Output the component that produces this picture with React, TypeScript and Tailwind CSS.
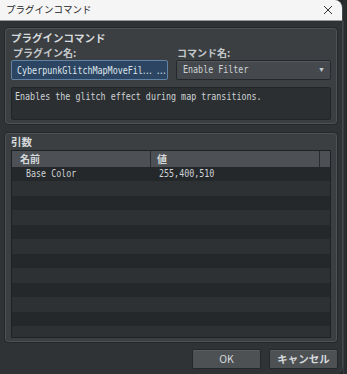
import React from "react";

const jp = { fontFamily: '"Noto Sans CJK JP", "Noto Sans", sans-serif' };
const mono = { fontFamily: '"DejaVu Sans Mono", "Liberation Mono", monospace' };

function Mono({ children, className = "" }: { children: React.ReactNode; className?: string }) {
  return (
    <span className={"inline-block origin-left scale-x-[0.76] whitespace-pre " + className} style={mono}>
      {children}
    </span>
  );
}

export default function App() {
  const rows = Array.from({ length: 12 });
  return (
    <div className="w-[347px] h-[374px] bg-[#25282a] flex overflow-hidden">
      <div className="w-[343px] h-full shrink-0 rounded-r-[8px] overflow-hidden flex flex-col bg-[#2f3336] border-r border-[#45494c]">
        <div className="h-[21px] shrink-0 bg-[#f5f5f5] flex items-center justify-between pl-[6px] pr-[8px] border-b border-[#9a9a9a]">
          <span className="text-[9.5px] text-[#222] leading-none" style={jp}>プラグインコマンド</span>
          <svg width="10" height="10" viewBox="0 0 10 10" className="mr-[1px]">
            <path d="M1 1 L9 9 M9 1 L1 9" stroke="#333" strokeWidth="1" />
          </svg>
        </div>
        <div className="flex-1 min-h-0 flex flex-col px-[4px] pt-[6px] pb-[5px]">
          <div className="h-[98px] shrink-0 rounded-[4px] border border-[#25282b] bg-[#3b3f42] shadow-[inset_0_0_0_1px_#4d5255] px-[6px] pt-[3px] flex flex-col">
            <div className="text-[10.5px] font-bold text-[#d8dbdd] leading-[14px]" style={jp}>プラグインコマンド</div>
            <div className="flex gap-[8px] mt-[1px]">
              <div className="w-[157px] flex flex-col">
                <div className="text-[10px] font-bold text-[#c4c8cb] leading-[13px] pl-[2px]" style={jp}>プラグイン名:</div>
                <div className="mt-[1px] h-[20px] bg-[#2c4563] border border-[#6183a6] rounded-[2px] flex items-center pl-[5px] overflow-hidden">
                  <Mono className="text-[11px] leading-[14px] text-[#dfe5ea]">
                    CyberpunkGlitchMapMoveFil<span style={jp}>…</span> <span style={jp}>…</span>
                  </Mono>
                </div>
              </div>
              <div className="flex-1 flex flex-col">
                <div className="text-[10px] font-bold text-[#c4c8cb] leading-[13px] pl-[1px]" style={jp}>コマンド名:</div>
                <div className="relative mt-[1px] h-[20px] bg-[#45494d] border border-[#26292c] rounded-[2px] flex items-center pl-[6px] overflow-hidden shadow-[inset_0_1px_0_#53575b]">
                  <Mono className="text-[11px] leading-[14px] text-[#cfd3d6]">Enable Filter</Mono>
                  <span className="absolute right-[5px] top-[4px] text-[7px] text-[#c8cbce]">▼</span>
                </div>
              </div>
            </div>
            <div className="mt-[7px] h-[33px] bg-[#2b2f32] border border-[#222528] rounded-[2px] px-[3px] pt-[2px] overflow-hidden flex items-start">
              <Mono className="text-[11px] text-[#cfd3d6] leading-[14px]">Enables the glitch effect during map transitions.</Mono>
            </div>
          </div>
          <div className="mt-[7px] flex-1 min-h-0 rounded-[4px] border border-[#25282b] bg-[#3b3f42] shadow-[inset_0_0_0_1px_#4d5255] px-[6px] pt-[2px] pb-[4px] flex flex-col">
            <div className="text-[10.5px] font-bold text-[#d8dbdd] leading-[14px] shrink-0" style={jp}>引数</div>
            <div className="mt-[1px] flex-1 min-h-0 border border-[#1f2224] bg-[#2d3134] flex flex-col overflow-hidden">
              <div className="h-[16px] shrink-0 flex bg-[#4d5155] text-[10px] text-[#d6d9dc] leading-none" style={jp}>
                <div className="w-[139px] border-r border-[#2a2d30] flex items-center pl-[8px] font-bold">名前</div>
                <div className="w-[169px] border-r border-[#2a2d30] flex items-center pl-[6px] font-bold">値</div>
                <div className="flex-1" />
              </div>
              <div className="h-[14px] shrink-0 bg-[#25282b] flex items-center text-[11px] leading-[14px] text-[#cfd3d6]">
                <div className="w-[139px] pl-[14px] flex"><Mono>Base Color</Mono></div>
                <div className="pl-[8px] flex"><Mono>255,400,510</Mono></div>
              </div>
              {rows.map((_, i) => (
                <div key={i} className={"h-[14.5px] shrink-0 " + (i % 2 === 0 ? "bg-[#2d3134]" : "bg-[#25282b]")} />
              ))}
            </div>
          </div>
          <div className="flex shrink-0 justify-end gap-[8px] mt-[6px]">
            <button className="w-[69px] h-[20px] bg-[#4d5154] border border-[#25282b] rounded-[2px] text-[10.5px] text-[#d6d9dc] shadow-[inset_0_1px_0_#5a5e62]" style={jp}>OK</button>
            <button className="w-[69px] h-[20px] bg-[#4d5154] border border-[#25282b] rounded-[2px] text-[10.5px] font-bold text-[#d6d9dc] shadow-[inset_0_1px_0_#5a5e62]" style={jp}>キャンセル</button>
          </div>
        </div>
      </div>
      <div className="flex-1 bg-[#2a2d30] flex flex-col">
        <div className="h-[21px]" />
        <div className="flex-1 border-l border-[#3a3d40]" />
      </div>
    </div>
  );
}
